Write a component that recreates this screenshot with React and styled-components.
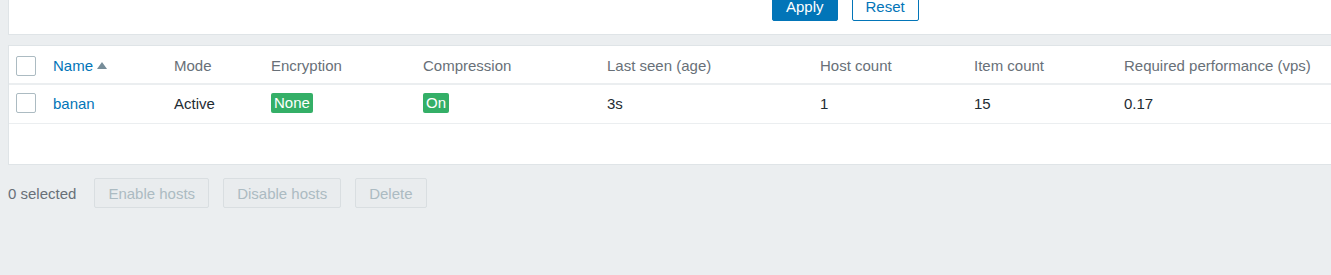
import React from "react";
import styled, { createGlobalStyle } from "styled-components";

const Global = createGlobalStyle`
  html, body { margin: 0; padding: 0; }
  body {
    background: #ebeef0;
    font-family: Arial, "Liberation Sans", sans-serif;
    font-size: 15px;
    color: #1f2c33;
    overflow: hidden;
  }
`;

const Page = styled.div`
  padding-left: 8px;
  height: 275px;
`;

const FilterPanel = styled.div`
  background: #fff;
  border-left: 1px solid #dfe4e7;
  border-bottom: 1px solid #dfe4e7;
  height: 35px;
  box-sizing: border-box;
  display: flex;
  align-items: flex-end;
  gap: 14px;
  padding: 0 0 13px 763px;
  overflow: hidden;
`;

const Button = styled.button`
  height: 30px;
  box-sizing: border-box;
  padding: 0 13px;
  border-radius: 2px;
  font-family: inherit;
  font-size: 15px;
  border: 1px solid #0275b8;
  background: ${(p) => (p.$primary ? "#0275b8" : "#fff")};
  color: ${(p) => (p.$primary ? "#fff" : "#0275b8")};
  flex-shrink: 0;
`;

const TablePanel = styled.div`
  margin-top: 10px;
  background: #fff;
  border: 1px solid #dfe4e7;
  border-right: none;
  padding-bottom: 40px;
`;

const Row = styled.div`
  display: grid;
  grid-template-columns: 44px 121px 97px 152px 184px 213px 154px 150px 1fr;
  align-items: center;
  box-sizing: border-box;
  height: ${(p) => (p.$head ? "39px" : "39px")};
  padding: ${(p) => (p.$head ? "2px 0 0" : "0 0 2px")};
  border-bottom: ${(p) => (p.$head ? "2px" : "1px")} solid #ebeef0;
  color: ${(p) => (p.$head ? "#687078" : "#1f2c33")};
  white-space: nowrap;
`;

const Cell = styled.div`
  display: flex;
  align-items: center;
`;

const CheckCell = styled(Cell)`
  padding-left: 7px;
`;

const Checkbox = styled.span`
  width: 18px;
  height: 18px;
  border: 1px solid #acbbc2;
  border-radius: 2px;
  background: #fff;
  display: inline-block;
`;

const Link = styled.a`
  color: #0275b8;
  text-decoration: none;
  display: inline-flex;
  align-items: center;
`;

const SortArrow = styled.span`
  display: inline-block;
  width: 0;
  height: 0;
  margin-left: 4px;
  border-left: 5px solid transparent;
  border-right: 5px solid transparent;
  border-bottom: 7px solid #768d99;
`;

const Badge = styled.span`
  background: #34af67;
  color: #fff;
  border-radius: 2px;
  padding: 1px 3px;
  line-height: 18px;
`;

const Footer = styled.div`
  display: flex;
  align-items: center;
  gap: 14px;
  margin-top: 13px;
`;

const Selected = styled.span`
  color: #687078;
  margin-right: 4px;
`;

const DisabledButton = styled.button`
  height: 30px;
  box-sizing: border-box;
  padding: 0 13px;
  border-radius: 2px;
  font-family: inherit;
  font-size: 15px;
  background: #e9ecee;
  border: 1px solid #d9dee1;
  color: #acbbc2;
`;

const headers = [
  "Mode",
  "Encryption",
  "Compression",
  "Last seen (age)",
  "Host count",
  "Item count",
  "Required performance (vps)",
];

export default function App() {
  return (
    <Page>
      <Global />
      <FilterPanel>
        <Button $primary>Apply</Button>
        <Button>Reset</Button>
      </FilterPanel>
      <TablePanel>
        <Row $head>
          <CheckCell>
            <Checkbox />
          </CheckCell>
          <Cell>
            <Link>
              Name
              <SortArrow />
            </Link>
          </Cell>
          {headers.map((h) => (
            <Cell key={h}>{h}</Cell>
          ))}
        </Row>
        <Row>
          <CheckCell>
            <Checkbox />
          </CheckCell>
          <Cell>
            <Link>banan</Link>
          </Cell>
          <Cell>Active</Cell>
          <Cell>
            <Badge>None</Badge>
          </Cell>
          <Cell>
            <Badge>On</Badge>
          </Cell>
          <Cell>3s</Cell>
          <Cell>1</Cell>
          <Cell>15</Cell>
          <Cell>0.17</Cell>
        </Row>
      </TablePanel>
      <Footer>
        <Selected>0 selected</Selected>
        <DisabledButton disabled>Enable hosts</DisabledButton>
        <DisabledButton disabled>Disable hosts</DisabledButton>
        <DisabledButton disabled>Delete</DisabledButton>
      </Footer>
    </Page>
  );
}
